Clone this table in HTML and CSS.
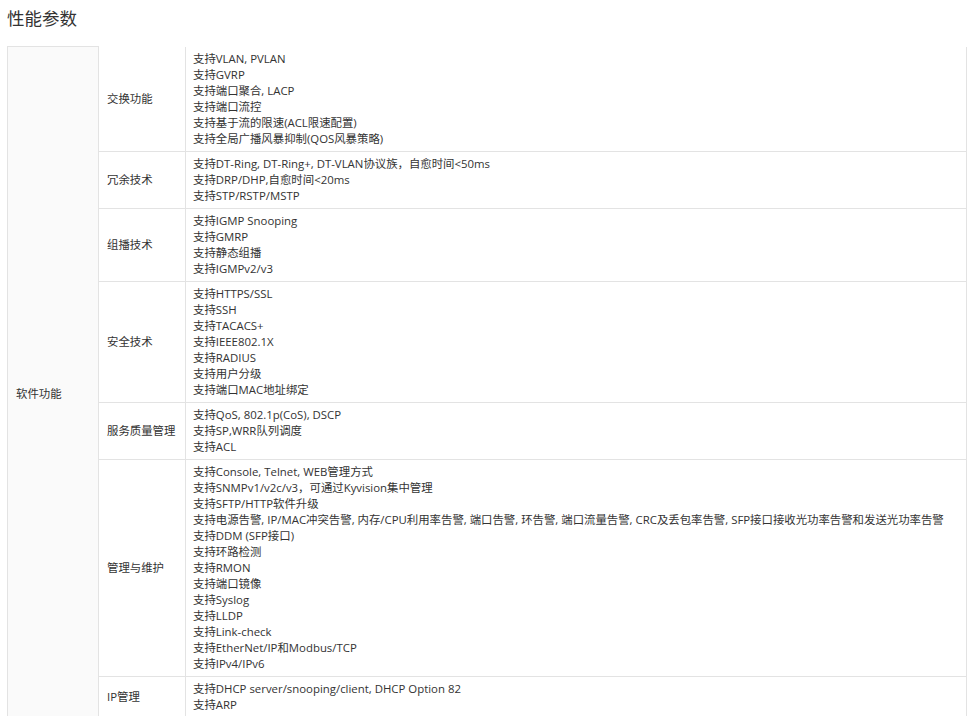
FILE: index.html
```html
<!DOCTYPE html>
<html lang="zh">
<head>
<meta charset="utf-8">
<link rel="stylesheet" href="styles.css">
</head>
<body>
<div class="page">
  <h2 class="title">性能参数</h2>
  <table class="spec">
    <colgroup>
      <col class="c1"><col class="c2"><col class="c3">
    </colgroup>
    <tbody>
      <tr>
        <td class="group" rowspan="7">软件功能</td>
        <td class="name">交换功能</td>
        <td class="val">支持VLAN, PVLAN<br>支持GVRP<br>支持端口聚合, LACP<br>支持端口流控<br>支持基于流的限速(ACL限速配置)<br>支持全局广播风暴抑制(QOS风暴策略)</td>
      </tr>
      <tr>
        <td class="name">冗余技术</td>
        <td class="val">支持DT-Ring, DT-Ring+, DT-VLAN协议族，自愈时间&lt;50ms<br>支持DRP/DHP,自愈时间&lt;20ms<br>支持STP/RSTP/MSTP</td>
      </tr>
      <tr>
        <td class="name">组播技术</td>
        <td class="val">支持IGMP Snooping<br>支持GMRP<br>支持静态组播<br>支持IGMPv2/v3</td>
      </tr>
      <tr>
        <td class="name">安全技术</td>
        <td class="val">支持HTTPS/SSL<br>支持SSH<br>支持TACACS+<br>支持IEEE802.1X<br>支持RADIUS<br>支持用户分级<br>支持端口MAC地址绑定</td>
      </tr>
      <tr>
        <td class="name">服务质量管理</td>
        <td class="val">支持QoS, 802.1p(CoS), DSCP<br>支持SP,WRR队列调度<br>支持ACL</td>
      </tr>
      <tr>
        <td class="name">管理与维护</td>
        <td class="val">支持Console, Telnet, WEB管理方式<br>支持SNMPv1/v2c/v3，可通过Kyvision集中管理<br>支持SFTP/HTTP软件升级<br>支持电源告警, IP/MAC冲突告警, 内存/CPU利用率告警, 端口告警, 环告警, 端口流量告警, CRC及丢包率告警, SFP接口接收光功率告警和发送光功率告警<br>支持DDM (SFP接口)<br>支持环路检测<br>支持RMON<br>支持端口镜像<br>支持Syslog<br>支持LLDP<br>支持Link-check<br>支持EtherNet/IP和Modbus/TCP<br>支持IPv4/IPv6</td>
      </tr>
      <tr>
        <td class="name">IP管理</td>
        <td class="val">支持DHCP server/snooping/client, DHCP Option 82<br>支持ARP</td>
      </tr>
    </tbody>
  </table>
</div>
</body>
</html>
```

FILE: styles.css
```css
html, body {
  margin: 0;
  padding: 0;
  background: #fff;
}
body {
  font-family: "Open Sans", "Noto Sans CJK SC", sans-serif;
  color: #333;
  font-size: 11.4px;
}
.page {
  padding: 0 6px 0 7px;
}
.title {
  margin: 0 0 16px 0;
  padding-top: 6px;
  font-size: 17.5px;
  line-height: 24px;
  font-weight: normal;
  color: #333;
}
.spec {
  border-collapse: collapse;
  width: 960px;
  table-layout: fixed;
}
.c1 { width: 91px; }
.c2 { width: 87px; }
.spec td {
  padding: 4px 4px 4px 8px;
  line-height: 16px;
  vertical-align: middle;
  border-bottom: 1px solid #e3e3e3;
  border-right: 1px solid #e3e3e3;
  text-align: left;
  white-space: nowrap;
}
.spec td.group {
  background: #fafafa;
  border: 1px solid #e3e3e3;
  padding-top: 28px;
}
.spec td.val {
  padding-left: 7px;
}
```
